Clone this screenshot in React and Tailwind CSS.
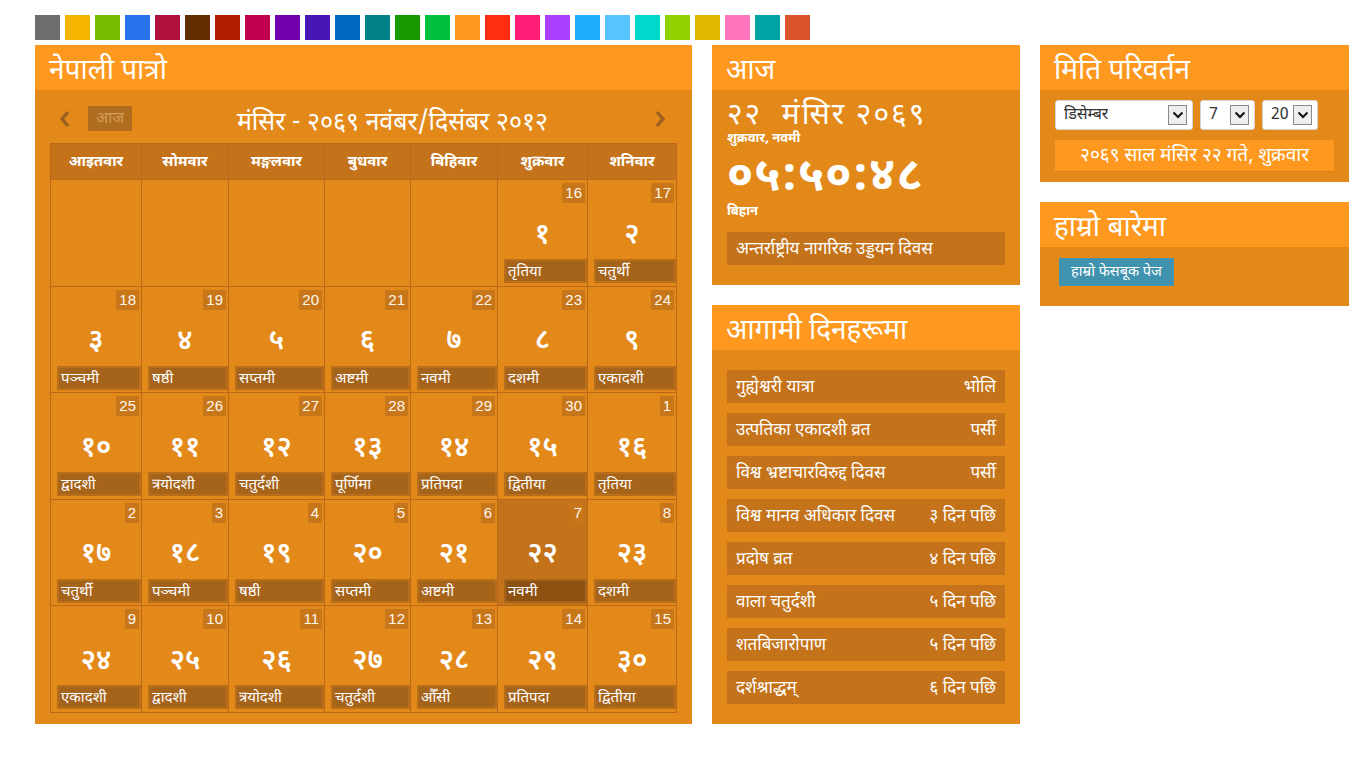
import React from "react";

const DEV = { fontFamily: '"Noto Sans Devanagari", "Noto Sans", "Liberation Sans", sans-serif' };
const LAT = { fontFamily: '"Liberation Sans", Arial, sans-serif' };

const swatches = [
  "#6d6d6d", "#f4b400", "#78ba00", "#2673ec", "#ae113d", "#632f00", "#b01e00", "#c1004f",
  "#7200ac", "#4617b4", "#006ac1", "#008287", "#199900", "#00c13f", "#ff981d", "#ff2e12",
  "#ff1d77", "#aa40ff", "#1faeff", "#56c5ff", "#00d8cc", "#91d100", "#e1b700", "#ff76bc",
  "#00a3a3", "#d9532c",
];

const weekdays = ["आइतवार", "सोमवार", "मङ्गलवार", "बुधवार", "बिहिवार", "शुक्रवार", "शनिवार"];

const rows = [
  [null, null, null, null, null, ["16", "१", "तृतिया"], ["17", "२", "चतुर्थी"]],
  [["18", "३", "पञ्चमी"], ["19", "४", "षष्ठी"], ["20", "५", "सप्तमी"], ["21", "६", "अष्टमी"], ["22", "७", "नवमी"], ["23", "८", "दशमी"], ["24", "९", "एकादशी"]],
  [["25", "१०", "द्वादशी"], ["26", "११", "त्रयोदशी"], ["27", "१२", "चतुर्दशी"], ["28", "१३", "पूर्णिमा"], ["29", "१४", "प्रतिपदा"], ["30", "१५", "द्वितीया"], ["1", "१६", "तृतिया"]],
  [["2", "१७", "चतुर्थी"], ["3", "१८", "पञ्चमी"], ["4", "१९", "षष्ठी"], ["5", "२०", "सप्तमी"], ["6", "२१", "अष्टमी"], ["7", "२२", "नवमी", true], ["8", "२३", "दशमी"]],
  [["9", "२४", "एकादशी"], ["10", "२५", "द्वादशी"], ["11", "२६", "त्रयोदशी"], ["12", "२७", "चतुर्दशी"], ["13", "२८", "औँसी"], ["14", "२९", "प्रतिपदा"], ["15", "३०", "द्वितीया"]],
];

const upcoming = [
  ["गुह्येश्वरी यात्रा", "भोलि"],
  ["उत्पतिका एकादशी व्रत", "पर्सी"],
  ["विश्व भ्रष्टाचारविरुद्द दिवस", "पर्सी"],
  ["विश्व मानव अधिकार दिवस", "३ दिन पछि"],
  ["प्रदोष व्रत", "४ दिन पछि"],
  ["वाला चतुर्दशी", "५ दिन पछि"],
  ["शतबिजारोपाण", "५ दिन पछि"],
  ["दर्शश्राद्धम्", "६ दिन पछि"],
];

function PanelHeader({ children }) {
  return (
    <div className="h-[45px] bg-[#fe981e] flex items-center pl-[14px] pt-[10px] text-white text-[28px] leading-[35px] whitespace-nowrap" style={DEV}>
      {children}
    </div>
  );
}

function Chevron({ dir }) {
  return (
    <svg width="12" height="18" viewBox="0 0 12 18">
      {dir === "left" ? (
        <polyline points="9,2 3,9 9,16" fill="none" stroke="#9b5f24" strokeWidth="3.2" />
      ) : (
        <polyline points="3,2 9,9 3,16" fill="none" stroke="#9b5f24" strokeWidth="3.2" />
      )}
    </svg>
  );
}

function Cell({ data }) {
  if (!data) return <div className="bg-[#e3891a] h-[105.6px]" />;
  const [en, np, tithi, today] = data;
  return (
    <div className={`${today ? "bg-[#c4731a]" : "bg-[#e3891a]"} h-[105.6px] flex flex-col pt-[3px] pr-[2px]`}>
      <div className="self-end h-[20px] px-[3px] bg-[#c7761a] text-[#fff7ee] text-[15px] leading-[20px]" style={LAT}>
        {en}
      </div>
      <div className="h-[56px] flex items-center justify-center text-white text-[28px] font-semibold pl-[2px] pt-[9px]" style={DEV}>
        {np}
      </div>
      <div
        className={`ml-[6px] mr-[-2px] h-[24px] border-2 ${today ? "bg-[#8d5112] border-[#a6631a]" : "bg-[#a6631a] border-[#b96e19]"} text-white text-[15px] leading-[23px] pl-[2px] whitespace-nowrap`}
        style={DEV}
      >
        {tithi}
      </div>
    </div>
  );
}

function SelectBox({ width, label }) {
  return (
    <div
      className={`${width} h-[30px] bg-white border border-[#d6d6d6] rounded-[3px] flex items-center justify-between pl-[8px] pr-[5px] overflow-hidden`}
    >
      <span className="text-[16px] text-[#333] whitespace-nowrap overflow-hidden pt-[2px]" style={DEV}>{label}</span>
      <div className="w-[19px] h-[20px] shrink-0 border border-[#8a8a8a] bg-[#eeeeee] flex items-center justify-center">
        <svg width="12" height="8" viewBox="0 0 12 8">
          <polyline points="1.5,1.5 6,6 10.5,1.5" fill="none" stroke="#111" strokeWidth="2" />
        </svg>
      </div>
    </div>
  );
}

export default function App() {
  return (
    <div className="min-h-[768px] bg-white pt-[15px] pl-[35px]" style={DEV}>
      <div className="flex gap-[5px]">
        {swatches.map((c) => (
          <div key={c} className="w-[25px] h-[25px]" style={{ backgroundColor: c }} />
        ))}
      </div>

      <div className="mt-[5px] flex items-start gap-[20px]">
        {/* Calendar */}
        <div className="w-[657px] bg-[#e3891a]">
          <PanelHeader>नेपाली पात्रो</PanelHeader>
          <div className="px-[15px] pt-[16px] pb-[11px]">
            <div className="flex items-center h-[25px] mb-[12px]">
              <div className="ml-[8px] w-[14px] flex justify-center"><Chevron dir="left" /></div>
              <div className="ml-[16px] w-[44px] h-[25px] bg-[#b06d1f] text-[#d39d5c] text-[16px] pt-[2px] flex items-center justify-center" style={DEV}>
                आज
              </div>
              <div className="flex-1 text-center text-white text-[25px] leading-[30px] pt-[10px] whitespace-nowrap" style={DEV}>
                मंसिर - २०६९ नवंबर/दिसंबर २०१२
              </div>
              <div className="mr-[10px] w-[14px] flex justify-center"><Chevron dir="right" /></div>
            </div>

            <div className="w-[627px] grid grid-cols-[90px_86px_95px_85px_86px_89px_88px] gap-px p-px bg-[#b8691a]">
              {weekdays.map((d) => (
                <div key={d} className="h-[35px] bg-[#c4731a] text-white text-[15px] font-bold pt-[4px] flex items-center justify-center" style={DEV}>
                  {d}
                </div>
              ))}
              {rows.map((r, i) => r.map((c, j) => <Cell key={`${i}-${j}`} data={c} />))}
            </div>
          </div>
        </div>

        {/* Middle column */}
        <div className="w-[308px] flex flex-col gap-[20px]">
          <div className="bg-[#e3891a]">
            <PanelHeader>आज</PanelHeader>
            <div className="px-[15px] pt-[12px] pb-[20px] text-white">
              <div className="h-[30px] text-[30px] leading-[30px] tracking-[2px] whitespace-nowrap" style={DEV}>२२&nbsp; मंसिर २०६९</div>
              <div className="h-[14px] text-[13px] font-bold leading-[14px] whitespace-nowrap" style={DEV}>शुक्रवार, नवमी</div>
              <div className="h-[50px] mt-[8px] text-[47px] font-bold leading-[50px] tracking-[1px] whitespace-nowrap" style={DEV}>०५:५०:४८</div>
              <div className="h-[16px] text-[13px] font-bold leading-[16px]" style={DEV}>बिहान</div>
              <div className="mt-[12px] h-[33px] bg-[#c4731a] flex items-center pl-[9px] pt-[4px] text-[17px] whitespace-nowrap" style={DEV}>
                अन्तर्राष्ट्रीय नागरिक उड्डयन दिवस
              </div>
            </div>
          </div>

          <div className="bg-[#e3891a]">
            <PanelHeader>आगामी दिनहरूमा</PanelHeader>
            <div className="px-[15px] pt-[20px] pb-[20px] flex flex-col gap-[10px]">
              {upcoming.map(([a, b]) => (
                <div key={a} className="h-[33px] bg-[#c4731a] flex items-center justify-between px-[9px] pt-[4px] text-white text-[17px] whitespace-nowrap" style={DEV}>
                  <span>{a}</span>
                  <span>{b}</span>
                </div>
              ))}
            </div>
          </div>
        </div>

        {/* Right column */}
        <div className="w-[309px] flex flex-col gap-[20px]">
          <div className="bg-[#e3891a]">
            <PanelHeader>मिति परिवर्तन</PanelHeader>
            <div className="px-[15px] pt-[10px] pb-[10px]">
              <div className="flex gap-[7px]">
                <SelectBox width="w-[138px]" label="डिसेम्बर" />
                <SelectBox width="w-[55px]" label="7" />
                <SelectBox width="w-[56px]" label="20" />
              </div>
              <div className="mt-[10px] h-[32px] bg-[#fe981e] border-b border-[#d9811a] flex items-center justify-center pt-[3px] text-white text-[19px] whitespace-nowrap" style={DEV}>
                २०६९ साल मंसिर २२ गते, शुक्रवार
              </div>
            </div>
          </div>

          <div className="bg-[#e3891a]">
            <PanelHeader>हाम्रो बारेमा</PanelHeader>
            <div className="pl-[19px] pt-[11px] pb-[20px]">
              <div className="inline-flex h-[28px] px-[12px] pt-[2px] items-center bg-[#3f93ae] text-white text-[14.5px] whitespace-nowrap" style={DEV}>
                हाम्रो फेसबूक पेज
              </div>
            </div>
          </div>
        </div>
      </div>
    </div>
  );
}
